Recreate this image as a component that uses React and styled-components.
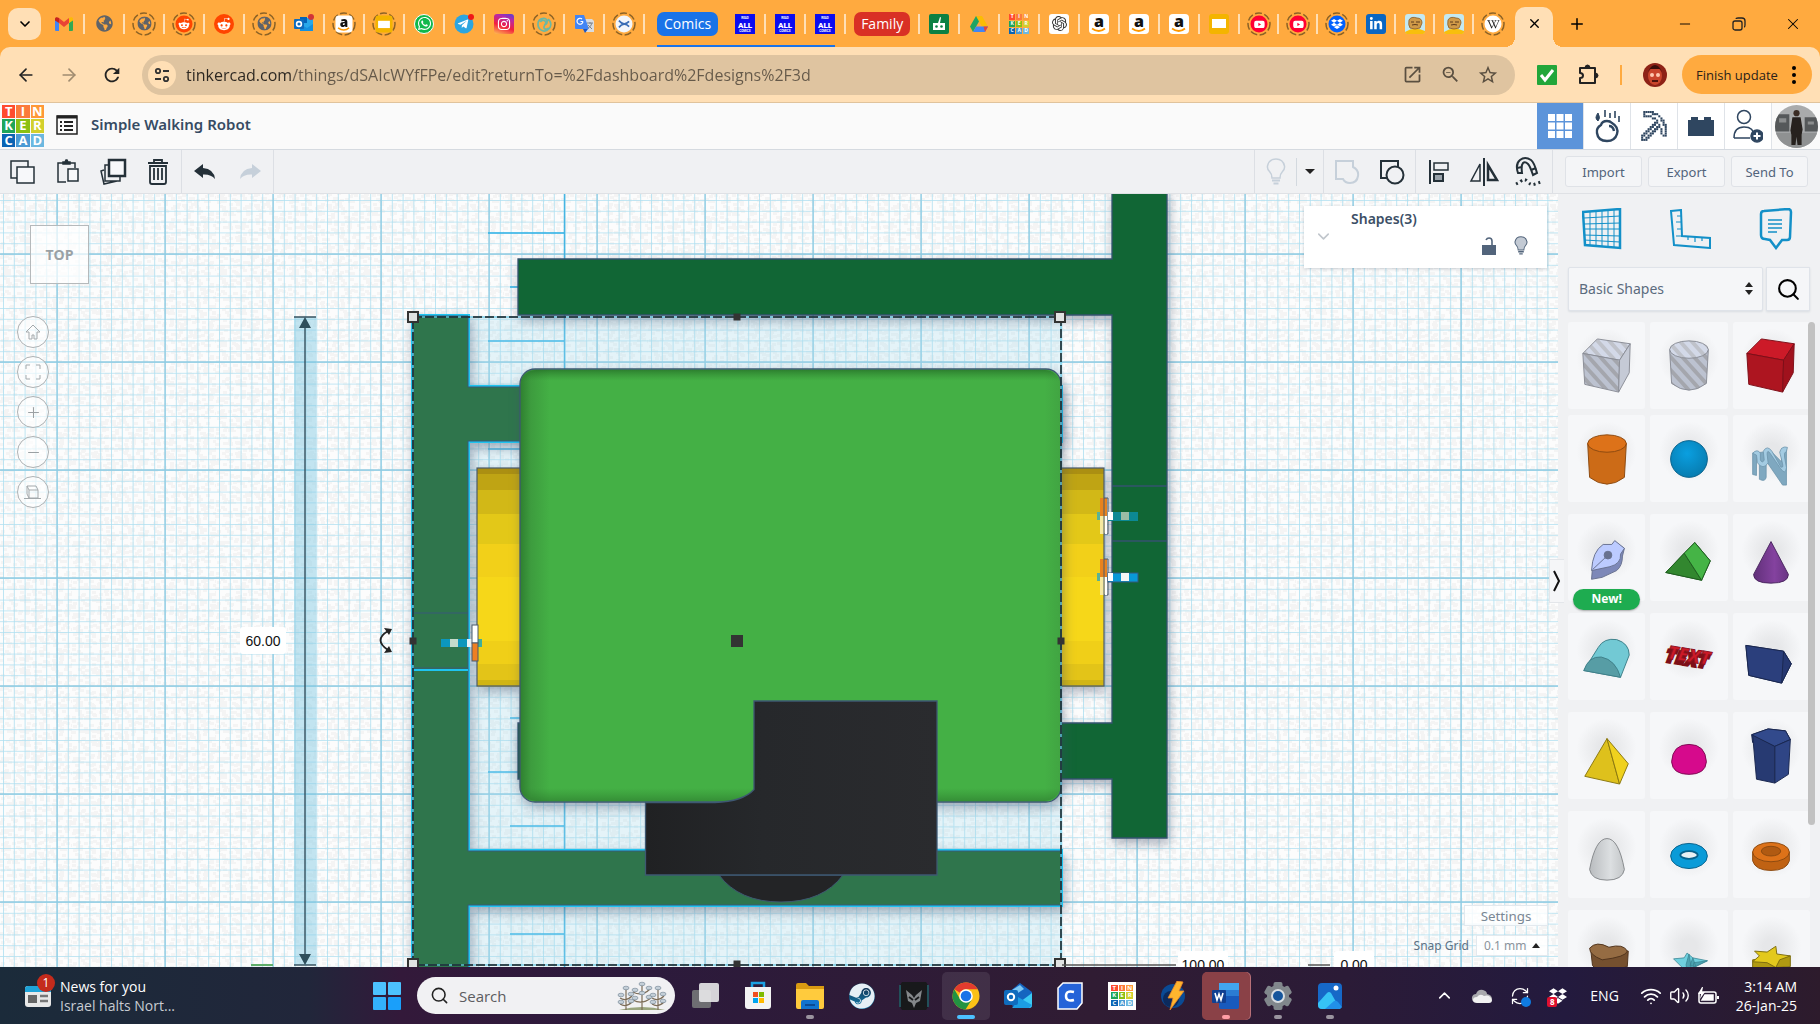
// src/App.jsx
import React, { useState } from "react";
import styled, { createGlobalStyle } from "styled-components";
import {
  FaRedditAlien,
  FaWhatsapp,
  FaTelegramPlane,
  FaInstagram,
  FaGlobeAmericas,
  FaLinkedinIn,
  FaDropbox,
  FaYoutube,
  FaWikipediaW,
  FaSteam,
} from "react-icons/fa";
import { SiOpenai } from "react-icons/si";
import { MdOpenInNew, MdZoomOut, MdStarBorder, MdOutlineRefresh } from "react-icons/md";
import {
  ArrowLeft,
  ArrowRight,
  ChevronDown,
  ChevronUp,
  X,
  Plus,
  Minus,
  Search,
  Wifi,
  Volume2,
  RefreshCw,
} from "lucide-react";

const GlobalStyle = createGlobalStyle`
  * { box-sizing: border-box; }
  html, body, #root { height: 100%; margin: 0; }
  body { font-family: "Open Sans", "Noto Sans", sans-serif; overflow: hidden; }
  button, input, select { font-family: inherit; }
  button { padding: 0; border: 0; background: none; cursor: pointer; color: inherit; }
  svg { display: block; flex: none; }
`;

/* ===== Tinkercad logo ===== */
const LOGO = [
  ["T", "#ff4b2f"], ["I", "#fb7a3c"], ["N", "#ff9838"],
  ["K", "#1ea55a"], ["E", "#8ac012"], ["R", "#d3d02c"],
  ["C", "#0a64b4"], ["A", "#4a9ad4"], ["D", "#6cb8e0"],
];

function TinkerLogo({ size, font }) {
  return (
    <LogoGrid $size={size} $font={font}>
      {LOGO.map(([l, c]) => (
        <LogoTile key={l} $bg={c}>{l}</LogoTile>
      ))}
    </LogoGrid>
  );
}

/* ===== favicons ===== */
const GmailIcon = () => (
  <svg width="18" height="14" viewBox="0 0 18 14">
    <path d="M0 2v11a1 1 0 0 0 1 1h3V6z" fill="#4285f4" />
    <path d="M18 2v11a1 1 0 0 1-1 1h-3V6z" fill="#34a853" />
    <path d="M4 6V1l5 4 5-4v5l-5 4z" fill="#ea4335" />
    <path d="M0 2C0 0 2-.5 4 1v5L0 3.500z" fill="#c5221f" />
    <path d="M18 2c0-2-2-2.500-4-1v5l4-2.500z" fill="#fbbc04" />
  </svg>
);
const GlobeIcon = () => <FaGlobeAmericas size={17} color="#5f6368" />;
const RedditIcon = () => (
  <Fav $bg="#ff4500" $round><FaRedditAlien size={14} color="#fff" /></Fav>
);
const OutlookIcon = () => (
  <svg width="20" height="20" viewBox="0 0 20 20">
    <path d="M6 4h13v13H6z" fill="#28a8ea" />
    <path d="M6 3h7v6H6z" fill="#0364b8" />
    <path d="M6 10l7 4 6-4v7H6z" fill="#1490df" />
    <rect y="5" width="10" height="10" rx="1" fill="#0f6cbd" />
    <circle cx="5" cy="10" r="2.400" fill="none" stroke="#fff" strokeWidth="1.600" />
    <circle cx="17" cy="3" r="3" fill="#d13438" />
  </svg>
);
const NewOutlookIcon = () => (
  <svg width="29" height="28" viewBox="0 0 29 28">
    <path d="M5 10L16 1l12 9v13a3 3 0 0 1-3 3H9z" fill="#1565c0" />
    <path d="M5 10L16 3l4 4-14 9z" fill="#7cc8f4" />
    <path d="M28 11v12a3 3 0 0 1-3 3H8z" fill="#3ccbf4" />
    <path d="M14 15l14 8-3 3H9z" fill="#1b9de2" />
    <rect y="8" width="14" height="15" rx="2" fill="#0f6cbd" />
    <circle cx="7" cy="15" r="3.200" fill="none" stroke="#fff" strokeWidth="2" />
  </svg>
);
const AmazonIcon = () => (
  <svg width="20" height="20" viewBox="0 0 20 20" overflow="visible">
    <rect width="20" height="20" rx="4" fill="#fff" />
    <text x="10" y="13" textAnchor="middle" fontFamily="Open Sans" fontWeight="800" fontSize="16" fill="#111">a</text>
    <path d="M3 14.500q7 5 13 0" fill="none" stroke="#ff9900" strokeWidth="1.800" />
  </svg>
);
const SlidesIcon = () => (
  <Fav $bg="#f4b400"><svg width="14" height="9"><rect width="14" height="9" fill="#fff" /></svg></Fav>
);
const WhatsappIcon = () => <Fav $bg="#10b84c" $round $ring><FaWhatsapp size={15} color="#fff" /></Fav>;
const TelegramIcon = () => (
  <svg width="20" height="20" viewBox="0 0 20 20">
    <circle cx="10" cy="10" r="9.500" fill="#2ca5e0" />
    <FaTelegramPlane x="3" y="4" size={12} color="#fff" />
    <circle cx="17" cy="3" r="3" fill="#f01818" />
  </svg>
);
const InstagramIcon = () => (
  <Fav $bg="linear-gradient(20deg,#fec053,#f2203e 40%,#b729a8 75%,#5342d6)"><FaInstagram size={14} color="#fff" /></Fav>
);
const SwirlIcon = () => (
  <svg width="20" height="20" viewBox="0 0 18 18" fill="none" stroke="#6ab8a5" strokeWidth="1.800">
    <path d="M7 16C1 13 1 4 8 3c5-1 6 6 1 7M10 16c7-1 8-9 3-12M5 7c3-4 8-1 5 3s1 6 4 3M7 16q4 2 7-2" />
  </svg>
);
const TranslateIcon = () => (
  <svg width="19" height="19" viewBox="0 0 19 19">
    <path d="M7 5h10l2 2v11H10z" fill="#dadce0" />
    <path d="M0 1h9l5 14H1a1 1 0 0 1-1-1z" fill="#4285f4" />
    <path d="M8 15h5l-3 4z" fill="#1a56c4" />
    <path d="M8 7.500H5.500M8 7.500A3 3 0 1 1 7 5" fill="none" stroke="#fff" strokeWidth="1.200" />
    <path d="M12 9h6M15 8v2M17 9q-1 4-4 5M13 11q2 2 4 4" fill="none" stroke="#80868b" />
  </svg>
);
const CrossIcon = () => (
  <Fav $bg="#f3f6fa" $round>
    <svg width="14" height="10" fill="none" stroke="#3a6db5" strokeWidth="2"><path d="M1 1q6 7 12 1M1 9q6-7 12-1" /></svg>
  </Fav>
);
const AllIcon = () => (
  <svg width="20" height="20" viewBox="0 0 20 20" overflow="visible">
    <rect width="20" height="20" fill="#0c0cf0" />
    <text x="10" y="5" textAnchor="middle" fontFamily="Roboto" fontWeight="700" fontSize="3" fill="#fff">READ</text>
    <text x="10" y="14" textAnchor="middle" fontFamily="Roboto" fontWeight="900" fontSize="8" fill="#fff">ALL</text>
    <text x="10" y="18" textAnchor="middle" fontFamily="Roboto" fontWeight="700" fontSize="3" fill="#fff">COMICS</text>
  </svg>
);
const RobotIcon = () => (
  <svg width="20" height="20" viewBox="0 0 20 20">
    <rect width="20" height="20" rx="2" fill="#0b8043" />
    <path d="M4 9h12v7H4zM9 9l2-6 1 .5L11 9z" fill="#fff" />
    <circle cx="7.500" cy="12.500" r="1.300" fill="#0b8043" /><circle cx="12.500" cy="12.500" r="1.300" fill="#0b8043" />
  </svg>
);
const DriveIcon = () => (
  <svg width="18" height="16" viewBox="0 0 18 16">
    <path d="M6 0h6l6 10.500h-6z" fill="#fbbc04" />
    <path d="M6 0L0 10.500 3 16l6-10.500z" fill="#1fa463" />
    <path d="M6 10.500h12L15 16H3z" fill="#4285f4" />
    <path d="M13.500 10.500H18L15 16z" fill="#ea4335" />
  </svg>
);
const OpenAiIcon = () => <Fav $bg="#fff"><SiOpenai size={15} color="#333" /></Fav>;
const YoutubeIcon = () => (
  <Fav $bg="#ff0033" $round><FaYoutube size={13} color="#fff" /></Fav>
);
const DropboxIcon = () => <Fav $bg="#0061fe" $round><FaDropbox size={14} color="#fff" /></Fav>;
const LinkedinIcon = () => <Fav $bg="#0a66c2"><FaLinkedinIn size={14} color="#fff" /></Fav>;
const WikiIcon = () => <Fav $bg="#fff" $round><FaWikipediaW size={15} color="#222" /></Fav>;
const FaceIcon = () => (
  <svg width="20" height="20" viewBox="0 0 20 20">
    <rect width="20" height="20" rx="3" fill="#c4e9f2" />
    <path d="M0 18q9-6 20-1v1q0 2-2 2H2q-2 0-2-2z" fill="#f8bf0c" />
    <path d="M4 6q2-4 8-2 5 0 5 5l-2 5q-5 2-10 0-2-3-1-8z" fill="#d09a48" stroke="#8a5a26" strokeWidth=".8" />
    <path d="M6 8h3M11 8h4M7 11q3-1 6 0" stroke="#5c3a1c" fill="none" />
  </svg>
);

const TABS_A = [
  ["Gmail", GmailIcon], ["Page", GlobeIcon], ["Page", GlobeIcon, 1], ["Reddit", RedditIcon, 1],
  ["Reddit", RedditIcon], ["Page", GlobeIcon, 1], ["Outlook", OutlookIcon], ["Amazon", AmazonIcon, 1],
  ["Slides", SlidesIcon, 1], ["WhatsApp", WhatsappIcon], ["Telegram", TelegramIcon], ["Instagram", InstagramIcon],
  ["Swirl", SwirlIcon, 1], ["Translate", TranslateIcon], ["Cross", CrossIcon, 1],
];
const TABS_B = [["Comics", AllIcon], ["Comics", AllIcon], ["Comics", AllIcon]];
const TABS_C = [
  ["Robot", RobotIcon], ["Drive", DriveIcon], ["Tinkercad", () => <TinkerLogo size={20} font={5} />],
  ["ChatGPT", OpenAiIcon], ["Amazon", AmazonIcon], ["Amazon", AmazonIcon], ["Amazon", AmazonIcon], ["Slides", SlidesIcon],
];
const TABS_D = [
  ["YouTube", YoutubeIcon, 1], ["YouTube", YoutubeIcon, 1], ["Dropbox", DropboxIcon, 1], ["LinkedIn", LinkedinIcon],
  ["Face", FaceIcon], ["Face", FaceIcon], ["Wikipedia", WikiIcon, 1],
];

function Tabs({ list, narrow }) {
  return list.map(([name, Icon, asleep], i) => (
    <Tab key={i} type="button" aria-label={name} $narrow={narrow}>
      {asleep ? (
        <Asleep>
          <svg width="24" height="24">
            <circle cx="12" cy="12" r="11" fill="none" stroke="#8b6226" strokeWidth="1.500" strokeDasharray="7 2.500" />
          </svg>
          <Shrink><Icon /></Shrink>
        </Asleep>
      ) : (
        <Icon />
      )}
    </Tab>
  ));
}

/* ===== toolbar icons ===== */
const line = { fill: "none", stroke: "#243038", strokeWidth: 1.5 };
const CopyIcon = () => (
  <svg width="26" height="26" viewBox="0 0 26 26" {...line}><path d="M18 8V2H1v17h6" /><path d="M7 8h17v16H7z" fill="#f7f8fa" /></svg>
);
const PasteIcon = () => (
  <svg width="24" height="26" viewBox="0 0 24 26" {...line}>
    <path d="M10 23H2V4h17v5" /><path d="M7 5V3h2l1-2h1l1 2h2v2z" fill="#243038" /><path d="M12 10h10v12H12z" fill="#f7f8fa" />
  </svg>
);
const DuplicateIcon = () => (
  <svg width="28" height="28" viewBox="0 0 28 28" {...line}>
    <path d="M5 12l-3 1 3 13 13-3M9 7H6v16h15v-4" /><path d="M10 2h16v16H10z" strokeWidth="2.500" fill="#f7f8fa" />
  </svg>
);
const TrashIcon = () => (
  <svg width="24" height="28" viewBox="0 0 24 28" {...line} strokeWidth="1.800">
    <path d="M2 5h20M8 5V2h8v3M4 8v16q0 2 2 2h12q2 0 2-2V8zM8 10v12M12 10v12M16 10v12" />
  </svg>
);
const ArrowCurve = ({ color, flip }) => (
  <svg width="22" height="16" viewBox="0 0 22 16" fill={color}>
    <path d={flip ? "M22 7L13 0v4Q2 5 1 15q4-5 12-4.500V14z" : "M0 7l9-7v4q11 1 12 11-4-5-12-4.500V14z"} />
  </svg>
);
const BulbIcon = ({ color, width = 20, height = 27, fill = "none" }) => (
  <svg width={width} height={height} viewBox="0 0 20 27" fill={fill} stroke={color} strokeWidth="1.500">
    <path d="M6 20q0-4-2.500-6.500Q1 11 1.500 8 3 1 10 1t8.500 7q.5 3-2 5.500Q14 16 14 20z" /><path d="M6 22.500h8M7.500 25.500h5" strokeWidth="2" />
  </svg>
);
const GroupIcon = () => (
  <svg width="26" height="26" viewBox="0 0 26 26" fill="none" stroke="#c6d0da" strokeWidth="2"><path d="M2 2h17v6q6 3 5 9-1 7-8 7-5 0-7-4H2z" /></svg>
);
const UngroupIcon = () => (
  <svg width="26" height="26" viewBox="0 0 26 26" {...line} strokeWidth="2"><path d="M9 19H2V2h17v6" /><circle cx="16" cy="16" r="8.500" /></svg>
);
const AlignIcon = () => (
  <svg width="22" height="26" viewBox="0 0 22 26" {...line}><path d="M2 1v24" strokeWidth="2" /><path d="M6 4h14v7H6z" /><path d="M6 15h9v7H6z" fill="#9aa3ab" strokeWidth="2" /></svg>
);
const MirrorIcon = () => (
  <svg width="30" height="28" viewBox="0 0 30 28" {...line}><path d="M15 0v28" strokeWidth="2" /><path d="M11 6v17H2z" /><path d="M19 7v15h9z" strokeWidth="2.500" /></svg>
);
const MagnetIcon = () => (
  <svg width="28" height="32" viewBox="0 0 28 32" {...line} strokeWidth="2">
    <path d="M3 17Q0 8 5 4t11 0q3 2 6 13l-4 2q-3-9-5-11-3-3-5-1-2 2-1 10z" /><path d="M2 12l5-1M16 14l5-2" />
    <path d="M1 28l4-2q4-4 7-1 4 5 8 3l6-2" strokeDasharray="2 3" strokeWidth="3" />
  </svg>
);

/* ===== mode icons ===== */
const GridIcon = () => (
  <svg width="24" height="24" viewBox="0 0 24 24" fill="#fff">
    {[0, 1, 2].map((r) => [0, 1, 2].map((c) => <rect key={`${r}${c}`} x={c * 8.5} y={r * 8.5} width="7" height="7" />))}
  </svg>
);
const AppleIcon = () => (
  <svg width="28" height="34" viewBox="0 0 28 34" fill="none" stroke="#2f4660" strokeWidth="2.400">
    <path d="M8 16q1-4 6-4 3 0 5 2 7 4 5 11-2 7-10 7-9 0-10-8-1-5 4-8zM16 17q4 0 5 5" />
    <path d="M5 4q-4 5 0 8 3-3 0-8z" fill="#2f4660" strokeWidth="1" /><path d="M12 1v7M17 4v5M22 2v7M26 7v6" strokeWidth="1.600" />
  </svg>
);
const PICK = [
  "..XXXXX.......", "..X...XXX.....", "..XXXX...X....", "......XX..X...", "........X.XX..", ".......XX..X..", "......XX.X.XX.",
  ".....XX.XX..X.", "....XX.XX.X.X.", "...XX.XX..X.X.", "..XX.XX...X.X.", ".XX.XX.....XX.", ".X.XX.........", ".XXX..........",
];
const PickaxeIcon = () => (
  <svg width="30" height="32" viewBox="0 0 28 28" fill="#2f4660">
    {PICK.map((r, y) => [...r].map((c, x) => c === "X" && <rect key={`${x}-${y}`} x={x * 2} y={y * 2} width="1.900" height="1.900" />))}
  </svg>
);
const BrickIcon = () => (
  <svg width="26" height="20" viewBox="0 0 26 20" fill="#2f4660"><path d="M0 4h3V1h7v3h6V1h7v3h3v16H0z" /></svg>
);
const InviteIcon = () => (
  <svg width="30" height="34" viewBox="0 0 30 34" fill="none" stroke="#2f4660" strokeWidth="1.500">
    <circle cx="11" cy="8" r="6.500" /><path d="M1 29q0-11 10-11t10 9M1 29h16" /><circle cx="24" cy="27" r="6" fill="#2f4660" />
    <path d="M24 23.500v7M20.500 27h7" stroke="#fff" strokeWidth="2" />
  </svg>
);

/* ===== sidebar tools ===== */
const blue = { fill: "none", stroke: "#1390c8", strokeWidth: 2 };
const WorkplaneIcon = () => (
  <svg width="40" height="42" viewBox="0 0 40 42" {...blue}>
    <path d="M1 4l37-3v39L3 37z" strokeWidth="2.500" />
    <path d="M2 10l36-2M2 16l36-1M2 21h36M2 27l36 1M2 32l36 2M8 4v33M14 3v35M20 3v36M26 2v37M32 2v38" strokeWidth="1" />
  </svg>
);
const RulerIcon = () => (
  <svg width="42" height="40" viewBox="0 0 42 40" {...blue}>
    <path d="M1 2l10-1 1 26 28 2v10L4 36z" /><path d="M11 7H7M11 13H6M11 20H7M18 28v3M25 28v5M32 29v3M12 27l-6 0" strokeWidth="1.200" />
  </svg>
);
const NotesIcon = () => (
  <svg width="34" height="42" viewBox="0 0 34 42" {...blue} strokeWidth="2.500">
    <path d="M5 3l24-2q3 0 3 3l-1 25q0 3-3 3h-5l-6 8-6-8-5-1q-4 0-4-4L2 6q0-3 3-3z" /><path d="M9 12h14M9 16h14M9 20h14M9 24h9" strokeWidth="1.500" />
  </svg>
);

/* ===== basic shapes, each drawn in a 60x64 box ===== */
const SHAPES = [
  ["Box hole", (
    <g stroke="#8a8d96" strokeWidth="1">
      <path d="M5 19L20 4l34 5-11 17z" fill="url(#holeLight)" /><path d="M5 19l38 7-1 33-35-8z" fill="url(#holeDark)" /><path d="M54 9L43 26l-1 33 11-20z" fill="#c5cad6" />
    </g>
  )],
  ["Cylinder hole", (
    <g stroke="#8a8d96"><path d="M10 15l2 35q18 14 36 0l2-35z" fill="url(#holeDark)" /><ellipse cx="30" cy="15" rx="20" ry="9" fill="url(#holeLight)" /></g>
  )],
  ["Box", (
    <g stroke="#7d0f18"><path d="M5 19L20 4l34 5-11 17z" fill="#cc1a28" /><path d="M5 19l38 7-1 33-35-8z" fill="#ad1520" /><path d="M54 9L43 26l-1 33 11-20z" fill="#a0121d" /></g>
  )],
  ["Cylinder", (
    <g stroke="#8c4a10"><path d="M10 16l2 35q18 14 36 0l2-35z" fill="#cc6b17" /><ellipse cx="30" cy="16" rx="20" ry="9" fill="#dd7219" /></g>
  )],
  ["Sphere", <circle cx="30" cy="32" r="19" fill="url(#ballBlue)" stroke="#07618c" />],
  ["Scribble", (
    <g strokeLinejoin="round" stroke="#6c93ab" strokeWidth=".8">
      <path d="M11 26v22l4 1V30l3 2v21q6 3 7-2V34l17 25h4V21h-5v14L30 24z" fill="#7fa8c0" />
      <path d="M11 26q5-5 8 0v7q2 4 4 0l-1-9q4-7 9 0l9 16q3 2 2-3l-3-12q2-7 8-5l-1 4q-3 1-2 6l2 11q-1 8-6 1L29 26q-3-4-3 1l1 9q-5 8-11 0l-1-8z" fill="#a3cbe2" />
    </g>
  )],
  ["Pen", (
    <g stroke="#68718f"><path d="M14 54l1-12q2-16 14-21l6-1 4-4 9 6-2 8q0 10-6 15l-15 7z" fill="#7d88b8" /><path d="M14 45q1-20 12-27h9l3-4 10 8-4 6q1 10-11 13z" fill="#bccbff" /><circle cx="31" cy="29" r="4" fill="#68718f" /><path d="M15 44l16-15" /></g>
  ), "New!"],
  ["Roof", (
    <g stroke="#1f5d20"><path d="M6 47L36 16l16 19-9 20z" fill="#45ae46" /><path d="M6 47l19-20 18 28z" fill="#32872f" /><path d="M36 16L25 27l18 28 9-20z" fill="#45b446" /></g>
  )],
  ["Cone", <path d="M30 15l18 34q0 9-18 9t-18-9z" fill="url(#conePurple)" stroke="#4b2760" />],
  ["Round roof", (
    <g stroke="#3e8089"><path d="M6 46l15-24q6-10 19-8 13 4 13 16l-9 23z" fill="#72c9d4" /><path d="M6 46q5-15 18-14 15 3 20 21z" fill="#579da5" /></g>
  )],
  ["Text", (
    <g transform="rotate(9 30 32)" fontFamily="Open Sans" fontWeight="800" fontStyle="italic" fontSize="19" textAnchor="middle">
      <text x="28" y="41" fill="#7d0f18" stroke="#7d0f18" strokeWidth="2">TEXT</text><text x="30" y="37" fill="#cc1a28" stroke="#8f121c" strokeWidth="1">TEXT</text>
    </g>
  )],
  ["Wedge", (
    <g stroke="#1a2750"><path d="M4 20l39 6-2 33-34-8z" fill="#2b3f7c" /><path d="M4 20l39 6 8 13-10 20-34-8z" fill="#2b3f7c" /><path d="M43 26l8 13-10 20z" fill="#263871" /></g>
  )],
  ["Pyramid", (
    <g stroke="#8a7710"><path d="M30 14L7 53l36 8z" fill="#dec11c" /><path d="M30 14l22 26-9 21z" fill="#efd11e" /></g>
  )],
  ["Half sphere", <path d="M12 38q1-18 18-18t18 18q-1 13-18 13T12 38z" fill="#d60a8c" stroke="#7d0852" />],
  ["Polygon", (
    <g stroke="#1a2750"><path d="M10 10l17-6 18 2 5 9-16 7-23-4z" fill="#324a8c" /><path d="M11 10l23 12v38l-19-4z" fill="#273a72" /><path d="M10 10l17-6 18 2 5 9-16 7z" fill="#324a8c" /><path d="M50 15l-16 7v38l14-9z" fill="#2f4585" /></g>
  )],
  ["Paraboloid", <path d="M12 47q6-32 18-32t18 32q-2 11-18 11t-18-11z" fill="url(#grey)" stroke="#86898c" />],
  ["Torus", (
    <g><ellipse cx="30" cy="33" rx="19" ry="13" fill="#0a9bd8" stroke="#07618c" /><ellipse cx="30" cy="32" rx="9" ry="4" fill="#e8eff3" stroke="#07618c" strokeWidth="2" /></g>
  )],
  ["Tube", (
    <g stroke="#8c4a10"><path d="M11 29v9q3 10 19 10t19-10v-9z" fill="#c06213" /><ellipse cx="30" cy="29" rx="19" ry="10" fill="#dd7219" /><ellipse cx="30" cy="28" rx="10" ry="5" fill="#b05a12" /></g>
  )],
  ["Heart", (
    <g stroke="#50341d"><path d="M13 26l2 18 10 9 26-8 1-16z" fill="#75502f" /><path d="M25 38Q12 33 12 26q7-8 20-1 15-4 19 4-1 6-26 9z" fill="#956c43" /></g>
  )],
  ["Star 5", (
    <g stroke="#3a8593" strokeWidth=".8"><path d="M14 37l11-1 3-5 6 5 15 3-12 6 1 11-9-5-12 3 5-9z" fill="#6fd0de" /><path d="M30 32l-3 11 1 8 5-1zM34 36l-3 8 6 1zM49 39l-14 2-1 5z" fill="#4ba3b1" /></g>
  )],
  ["Star 6", (
    <g stroke="#7d6d0e"><path d="M11 38v13h14l10 5V46l15-1V34z" fill="#b09a12" /><path d="M13 29l13 1 9-6 1 8 14 2-11 4-4 8-9-5-15-1 7-6z" fill="#e3c91c" /></g>
  )],
];

function ShapeDefs() {
  return (
    <HiddenSvg width="0" height="0" aria-hidden="true">
      <defs>
        <pattern id="holeLight" width="9" height="9" patternUnits="userSpaceOnUse" patternTransform="rotate(-42)"><rect width="9" height="9" fill="#d3d9e8" /><rect width="4" height="9" fill="#bfc2ca" /></pattern>
        <pattern id="holeDark" width="9" height="9" patternUnits="userSpaceOnUse" patternTransform="rotate(-42)"><rect width="9" height="9" fill="#bcc2d0" /><rect width="4" height="9" fill="#a4a6ad" /></pattern>
        <radialGradient id="ballBlue" cx=".45" cy=".35" r=".7"><stop offset="0" stopColor="#0a9fe0" /><stop offset="1" stopColor="#077aad" /></radialGradient>
        <linearGradient id="conePurple"><stop offset="0" stopColor="#61307a" /><stop offset=".6" stopColor="#84429f" /><stop offset="1" stopColor="#6a3584" /></linearGradient>
        <linearGradient id="grey"><stop offset="0" stopColor="#b9bcbf" /><stop offset=".6" stopColor="#dcdfe1" /><stop offset="1" stopColor="#c3c6c8" /></linearGradient>
      </defs>
    </HiddenSvg>
  );
}

/* ===== workplane scene ===== */
const SPECKS = Array.from({ length: 260 }, (_, i) => [(i * 37 + ((i * i) % 23)) % 72, (i * 53 + ((i * i * 7) % 31)) % 72]);
const WHEEL = [
  [468, 6, "#ab8f12"], [474, 16, "#bfa414"], [490, 24, "#d2b817"], [514, 30, "#e3c818"], [544, 33, "#f2d019"],
  [577, 64, "#f6d719"], [641, 23, "#f0cf18"], [664, 16, "#e3c418"], [680, 6, "#d1b514"],
];
const TICKS = [[488, 233], [510, 287], [488, 341], [488, 449], [510, 718], [488, 772], [510, 826], [510, 934]];

function Wheel({ x, w }) {
  return (
    <g filter="url(#soft)">
      {WHEEL.map(([y, h, c]) => <rect key={y} x={x} y={y} width={w} height={h + 0.5} fill={c} />)}
      <rect x={x} y="468" width={w} height="218" fill="none" stroke="#4b5a6b" strokeWidth="1.200" />
    </g>
  );
}

function Bolt({ y, muted }) {
  return (
    <g>
      <rect x="1097" y={y - 4} width="4" height="8" fill="#5ab295" />
      <rect x="1100" y={y - 18} width="7" height="18" fill="#e8821e" />
      <rect x="1100" y={y} width="7" height="18" fill="#f6e9a0" />
      <path d={`M1104 ${y - 18}h4v36h-4z`} fill="none" stroke="#4b5a6b" />
      <rect x="1105" y={y} width="2" height="18" fill="#fff" />
      <rect x="1108" y={y - 4} width="30" height="9" fill={muted ? "#0c8994" : "#0899d6"} stroke={muted ? "none" : "#35587c"} />
      <rect x="1108" y={y - 4} width="5" height="8" fill="#fff" />
      <rect x="1121" y={y - 4} width="8" height="8" fill={muted ? "#9bbda5" : "#f4f6f6"} />
    </g>
  );
}

function Scene() {
  return (
    <SceneSvg viewBox="0 194 1558 773" preserveAspectRatio="xMinYMin slice">
      <defs>
        <pattern id="paper" width="72" height="72" patternUnits="userSpaceOnUse">
          <rect width="72" height="72" fill="#fcfcfc" />
          {SPECKS.map(([x, y], i) => <rect key={i} x={x} y={y} width="4" height="3" fill="#f4f4f4" />)}
        </pattern>
        <pattern id="minor" x="57" y="254" width="10.8" height="10.8" patternUnits="userSpaceOnUse">
          <path d="M0 0H10.800M0 0V10.800" stroke="#aee0f1" strokeWidth="1.600" fill="none" />
        </pattern>
        <pattern id="major" x="56" y="253" width="108" height="108" patternUnits="userSpaceOnUse">
          <path d="M0 1H108M1 0V108" stroke="#8fcbe2" strokeWidth="1.300" fill="none" />
        </pattern>
        <filter id="soft" x="-20%" y="-10%" width="140%" height="120%" colorInterpolationFilters="sRGB">
          <feDropShadow dx="2" dy="5" stdDeviation="6" floodColor="#3b4a66" floodOpacity=".42" />
        </filter>
        <linearGradient id="bodyX">
          <stop offset="0" stopColor="#2f7f30" /><stop offset=".02" stopColor="#3d9c3e" /><stop offset=".055" stopColor="#44b045" />
          <stop offset=".97" stopColor="#44b045" /><stop offset="1" stopColor="#41a442" />
        </linearGradient>
        <linearGradient id="bodyY" x2="0" y2="1">
          <stop offset="0" stopColor="#1e6120" stopOpacity=".6" /><stop offset=".025" stopColor="#2b7a2c" stopOpacity="0" />
          <stop offset=".97" stopColor="#2b7a2c" stopOpacity="0" /><stop offset="1" stopColor="#276f28" stopOpacity=".5" />
        </linearGradient>
        <linearGradient id="head"><stop offset="0" stopColor="#202123" /><stop offset=".4" stopColor="#26282b" /><stop offset="1" stopColor="#2a2b2e" /></linearGradient>
      </defs>

      <rect y="194" width="1558" height="773" fill="url(#paper)" />
      <rect y="194" width="1558" height="773" fill="url(#minor)" />
      <rect y="194" width="1558" height="773" fill="url(#major)" />
      <path d="M564.500 194V967" stroke="#45b5e2" strokeWidth="1.500" />
      {TICKS.map(([x, y]) => <path key={y} d={`M${x} ${y}H564`} stroke="#2cb0e6" strokeWidth="1.300" />)}

      {/* selection footprint */}
      <rect x="413" y="317" width="648" height="648" fill="#a5dcee" fillOpacity=".28" />

      {/* dimension rule */}
      <rect x="294" y="317" width="22" height="648" fill="#7cc7e3" fillOpacity=".45" />
      <path d="M294 317h22M305 325V957M294 965h22" stroke="#36525f" strokeWidth="1.400" />
      <path d="M305 317l6 11h-12zM305 965l6-11h-12z" fill="#2f4f5c" />

      {/* rear frame */}
      <path d="M1112 190h55v648h-55V779H518V723h594V315H518V259h594z" fill="#116635" stroke="#34536f" strokeWidth="1.300" filter="url(#soft)" />
      <path d="M1112 486h55M1112 541h55" stroke="#34536f" strokeWidth="1.500" />

      {/* front frame */}
      <path d="M413 316h55v71h593v54H468v410H1061v54H468v64H413z" fill="#2f754c" stroke="#1fc4f0" strokeWidth="4" filter="url(#soft)" />
      <path d="M413 316h55v71h593v54H468v410H1061v54H468v64H413z" fill="#2f754c" stroke="#385a78" strokeWidth="1" />
      <path d="M413 613h55M413 668h55" stroke="#385a78" />
      <path d="M413 670h55" stroke="#1fc4f0" strokeWidth="2" />

      <Wheel x={477} w={44} />
      <Wheel x={1061} w={43} />

      {/* body */}
      <rect x="520" y="369" width="541" height="433" rx="15" fill="url(#bodyX)" stroke="#3e5872" strokeWidth="1.300" filter="url(#soft)" />
      <rect x="521" y="370" width="539" height="431" rx="15" fill="url(#bodyY)" />

      {/* head */}
      <path d="M719 875q20 27 62 27t62-27z" fill="#232426" stroke="#3e5872" />
      <path d="M754 701H937V875H645.500V802.500H715q28-1 39-13z" fill="url(#head)" stroke="#3e5872" strokeWidth="1.300" />

      <Bolt y={516} muted />
      <Bolt y={577} />

      {/* left bolt */}
      <rect x="441" y="639" width="36" height="8" fill="#0c97bd" />
      <rect x="450" y="639" width="8" height="8" fill="#c5dbcb" /><rect x="467" y="639" width="5" height="8" fill="#e6f3f8" />
      <rect x="478" y="639" width="4" height="8" fill="#3fae9c" />
      <rect x="472" y="625" width="6" height="18" fill="#fff" stroke="#4b5a6b" /><rect x="472" y="643" width="6" height="18" fill="#ee7f22" stroke="#4b5a6b" />

      {/* selection box */}
      <rect x="413" y="317" width="648" height="648" fill="none" stroke="#5fc8e8" strokeWidth="1.200" />
      <rect x="413" y="317" width="648" height="648" fill="none" stroke="#151b1e" strokeWidth="1.500" strokeDasharray="9 3" />
      {[[413, 317], [1060, 317], [413, 964], [1060, 964]].map(([x, y]) => (
        <rect key={`${x}${y}`} x={x - 5} y={y - 5} width="10" height="10" fill="#e0e2e2" stroke="#333" strokeWidth="2" />
      ))}
      {[[737, 317], [413, 641], [1061, 641], [737, 964]].map(([x, y]) => (
        <rect key={`${x}${y}`} x={x - 3.5} y={y - 3.5} width="7" height="7" fill="#333" />
      ))}
      <rect x="731" y="635" width="12" height="12" fill="#333" />

      {/* rotation handle */}
      <path d="M388 631q-15 9 0 19" fill="none" stroke="#222" strokeWidth="1.800" />
      <path d="M392 629l-8-1 5 7zM392 652l-8 1 5-7z" fill="#222" />

      <path d="M251 965h22" stroke="#5fae6a" strokeWidth="2" />
      <path d="M1062 965h114M1308 965h22" stroke="#555" strokeWidth="1.500" />
    </SceneSvg>
  );
}

/* ===== taskbar icons ===== */
const ChromeIcon = () => (
  <svg width="28" height="28" viewBox="0 0 28 28">
    <circle cx="14" cy="14" r="13.500" fill="#fbc116" />
    <path d="M2.300 7.200A13.500 13.500 0 0 1 25.700 7.200H14a6.800 6.800 0 0 0-6 3.500z" fill="#e33b2e" />
    <path d="M2.300 7.200A13.500 13.500 0 0 0 13.500 27.500L19.500 18 8 17z" fill="#229342" />
    <circle cx="14" cy="14" r="6.800" fill="#fff" /><circle cx="14" cy="14" r="5.300" fill="#1a73e8" />
  </svg>
);
const TASKS = [
  ["Task view", <svg width="28" height="28"><rect y="8" width="19" height="18" rx="2" fill="#6e6e72" /><rect x="7" y="1" width="20" height="19" rx="2" fill="#e8e8ea" fillOpacity=".9" /></svg>],
  ["Store", (
    <svg width="28" height="30"><path d="M8 8V2h12v6" fill="none" stroke="#1ba1e2" strokeWidth="2.500" /><path d="M1 6h26v19q0 3-3 3H4q-3 0-3-3z" fill="#f3f3f3" />
      <path d="M9 11h5v5H9z" fill="#f25022" /><path d="M15 11h5v5h-5z" fill="#7fba00" /><path d="M9 17h5v5H9z" fill="#00a4ef" /><path d="M15 17h5v5h-5z" fill="#ffb900" /></svg>
  )],
  ["Explorer", <svg width="30" height="28"><path d="M1 3q0-2 2-2h8l3 3h15v8H1z" fill="#d99b12" /><path d="M1 7h28v18q0 2-2 2H3q-2 0-2-2z" fill="#ffcb3d" /><path d="M6 20q0-2 2-2h14q2 0 2 2v7H6z" fill="#1173cf" /><path d="M10 23h10" stroke="#0b4a94" strokeWidth="2" /></svg>, "dot"],
  ["Steam", <SteamBall key="s" />],
  ["Predator", <svg width="30" height="30"><path d="M3 1h24l2 3v22l-2 3H3l-2-3V4z" fill="#18191b" /><path d="M1 4v22M29 4v22" stroke="#22505a" strokeWidth="2" /><path d="M7 9l6 5 2 3 2-3 6-5-2 11-4 2-2 5-2-5-4-2z" fill="#85888b" /><path d="M10 16l4 3M20 16l-4 3" stroke="#18191b" strokeWidth="1.800" /></svg>],
  ["Chrome", <ChromeIcon key="c" />, "active"],
  ["Outlook", <NewOutlookIcon key="o" />],
  ["Cura", <svg width="26" height="28"><path d="M6 1h19v20l-5 6H1V6z" fill="#2563d8" stroke="#fff" strokeWidth="1.500" /><path d="M17 10q-8-2-8 4t8 4" fill="none" stroke="#fff" strokeWidth="2.500" /></svg>],
  ["Tinkercad", <LogoPlate key="t" />],
  ["Bolt", <svg width="28" height="30"><circle cx="13" cy="15" r="12" fill="#0a4a94" /><circle cx="11" cy="18" r="8" fill="#0c2a5c" /><path d="M17 0l6 1-4 9 5 0-14 19 3-12H8z" fill="#ffb52e" stroke="#e8862a" strokeWidth=".8" /></svg>],
  ["Word", <svg width="28" height="28"><rect x="7" y="1" width="20" height="26" rx="2" fill="#185abd" /><path d="M7 1h20v7H7z" fill="#41a5ee" /><path d="M7 8h20v6H7z" fill="#2b7cd3" /><rect y="8" width="14" height="13" rx="1" fill="#103f91" /><path d="M3 11l2 7 2-6 2 6 2-7" fill="none" stroke="#fff" strokeWidth="1.600" /></svg>, "alert"],
  ["Settings", (
    <svg width="30" height="30" viewBox="0 0 30 30">
      <g fill="#81878c">{[0, 60, 120].map((a) => <rect key={a} x="10.500" y="1" width="9" height="28" rx="2" transform={`rotate(${a} 15 15)`} />)}<circle cx="15" cy="15" r="11" /></g>
      <circle cx="15" cy="15" r="6" fill="#16559c" stroke="#d8dde2" strokeWidth="2" />
    </svg>
  ), "dot"],
  ["Photos", <svg width="26" height="28"><rect x="1" y="1" width="24" height="26" rx="4" fill="#1668c7" /><path d="M1 21l9-10q2-2 4 0l9 16H5q-4 0-4-4z" fill="#36c3f5" /><path d="M8 27l9-8q2-1 4 1l4 5q-1 2-3 2z" fill="#2190e8" /><circle cx="19" cy="6" r="2.500" fill="#fff" /></svg>, "dot"],
];

function SteamBall() {
  return <Round $bg="linear-gradient(#15233f,#1387b8)"><FaSteam size={26} color="#e6eff5" /></Round>;
}
function LogoPlate() {
  return <Plate><TinkerLogo size={22} font={6} /></Plate>;
}

export default function App() {
  const [category, setCategory] = useState("Basic Shapes");
  const rows = [];
  for (let i = 0; i < SHAPES.length; i += 3) rows.push(SHAPES.slice(i, i + 3));

  return (
    <>
      <GlobalStyle />
      <ShapeDefs />
      <Screen>
        {/* tab strip */}
        <TabStrip>
          <TabMenu type="button" aria-label="Search tabs"><ChevronDown size={16} strokeWidth={2.5} /></TabMenu>
          <Group><Tabs list={TABS_A} /></Group>
          <ComicsGroup><Pill type="button" $bg="#1a73e8">Comics</Pill><Tabs list={TABS_B} /></ComicsGroup>
          <FamilyGroup><Pill type="button" $bg="#d93025">Family</Pill></FamilyGroup>
          <Group><Tabs list={TABS_C} /><Tabs list={TABS_D} narrow /></Group>
          <ActiveTab type="button" aria-label="Close tab"><X size={15} strokeWidth={2.2} /></ActiveTab>
          <NewTab type="button" aria-label="New tab"><Plus size={18} /></NewTab>
          <WindowButtons>
            <button type="button" aria-label="Minimize"><Minus size={16} strokeWidth={1.4} /></button>
            <button type="button" aria-label="Restore">
              <svg width="14" height="14" fill="none" stroke="#222" strokeWidth="1.300"><rect x="1" y="4" width="9" height="9" rx="2" /><path d="M4 2q0-1 2-1h4q3 0 3 3v4q0 2-1 2" /></svg>
            </button>
            <button type="button" aria-label="Close"><X size={18} strokeWidth={1.4} /></button>
          </WindowButtons>
        </TabStrip>

        {/* address bar */}
        <AddressRow>
          <NavBtn type="button" aria-label="Back"><ArrowLeft size={20} /></NavBtn>
          <NavBtn type="button" aria-label="Forward" $dim><ArrowRight size={20} /></NavBtn>
          <NavBtn type="button" aria-label="Reload"><MdOutlineRefresh size={22} /></NavBtn>
          <Omnibox>
            <SiteInfo type="button" aria-label="Site information">
              <svg width="16" height="16" fill="none" stroke="#333" strokeWidth="1.800"><circle cx="4" cy="4" r="2.200" /><path d="M9 4h6M1 12h6" /><circle cx="12" cy="12" r="2.200" /></svg>
            </SiteInfo>
            <Url aria-label="Address" defaultValue="tinkercad.com/things/dSAIcWYfFPe/edit?returnTo=%2Fdashboard%2Fdesigns%2F3d" />
            <OmniBtn type="button" aria-label="Open"><MdOpenInNew size={21} /></OmniBtn>
            <OmniBtn type="button" aria-label="Zoom"><MdZoomOut size={21} /></OmniBtn>
            <OmniBtn type="button" aria-label="Bookmark"><MdStarBorder size={22} /></OmniBtn>
          </Omnibox>
          <Extensions>
            <svg width="20" height="20"><rect width="20" height="20" rx="1" fill="#22a63a" /><path d="M4 10l4 5 8-10" fill="none" stroke="#fff" strokeWidth="3" /></svg>
            <svg width="21" height="21" fill="none" stroke="#222" strokeWidth="2"><path d="M2 4h15v15H2v-5q3 0 3-2.500T2 9z" strokeLinejoin="round" /><path d="M7 4q0-3 2.500-3T12 4zM17 9q3 0 3 2.500T17 14z" fill="#222" strokeWidth="1" /></svg>
            <BarLine />
            <svg width="24" height="24"><circle cx="12" cy="12" r="12" fill="#8e2216" /><ellipse cx="12" cy="13" rx="7" ry="9" fill="#c9452c" /><path d="M5 9q3-7 7-7t7 7l-2-3H7z" fill="#3a0d0a" /><circle cx="9" cy="12" r="2" fill="#ffc9b0" /><circle cx="15" cy="12" r="2" fill="#ffc9b0" /><path d="M9 18h6" stroke="#4e120c" strokeWidth="2" /></svg>
          </Extensions>
          <UpdateBtn type="button">
            Finish update
            <svg width="4" height="18"><circle cx="2" cy="2" r="2" /><circle cx="2" cy="9" r="2" /><circle cx="2" cy="16" r="2" /></svg>
          </UpdateBtn>
        </AddressRow>

        {/* app header */}
        <AppHeader>
          <TinkerLogo size={42} font={13} />
          <ListBtn type="button" aria-label="Designs">
            <svg width="22" height="20" fill="none" stroke="#222" strokeWidth="1.500"><rect x="1" y="1" width="20" height="18" /><path d="M1 2h20" strokeWidth="3" /><path d="M8 7h9M8 11h9M8 15h9M4 7h2M4 11h2M4 15h2" strokeWidth="2" /></svg>
          </ListBtn>
          <Title>Simple Walking Robot</Title>
          <Modes>
            <Mode type="button" aria-label="3D design" $active><GridIcon /></Mode>
            <Mode type="button" aria-label="Sim lab"><AppleIcon /></Mode>
            <Mode type="button" aria-label="Blocks"><PickaxeIcon /></Mode>
            <Mode type="button" aria-label="Bricks"><BrickIcon /></Mode>
            <Mode type="button" aria-label="Invite"><InviteIcon /></Mode>
            <Avatar type="button" aria-label="Account">
              <svg width="43" height="43" viewBox="0 0 42 42">
                <rect width="42" height="42" fill="#a9abac" /><path d="M0 9h14v17H0zM29 12h13v14H29z" fill="#55585a" /><path d="M0 27h42v15H0z" fill="#8f9192" /><path d="M4 13h7v4H4zM32 16h6v3h-6z" fill="#8b8d8e" />
                <circle cx="21" cy="8" r="3" fill="#3a2c25" /><path d="M17 12h8l2 12-1 5v10h-4l-1-8-1 8h-4V29l-1-4z" fill="#26211e" />
              </svg>
            </Avatar>
          </Modes>
        </AppHeader>

        {/* edit toolbar */}
        <EditBar>
          <Tools>
            <Tool type="button" aria-label="Copy"><CopyIcon /></Tool>
            <Tool type="button" aria-label="Paste"><PasteIcon /></Tool>
            <Tool type="button" aria-label="Duplicate"><DuplicateIcon /></Tool>
            <Tool type="button" aria-label="Delete"><TrashIcon /></Tool>
          </Tools>
          <Tools>
            <Tool type="button" aria-label="Undo"><ArrowCurve color="#243038" /></Tool>
            <Tool type="button" aria-label="Redo"><ArrowCurve color="#c6d0da" flip /></Tool>
          </Tools>
          <Spacer />
          <Tools>
            <Tool type="button" aria-label="Show all" $small><BulbIcon color="#c6d0da" /></Tool>
            <CaretBtn type="button" aria-label="Visibility options"><Triangle $down $big /></CaretBtn>
          </Tools>
          <Tools>
            <Tool type="button" aria-label="Group"><GroupIcon /></Tool>
            <Tool type="button" aria-label="Ungroup"><UngroupIcon /></Tool>
          </Tools>
          <Tools>
            <Tool type="button" aria-label="Align"><AlignIcon /></Tool>
            <Tool type="button" aria-label="Mirror"><MirrorIcon /></Tool>
            <Tool type="button" aria-label="Cruise"><MagnetIcon /></Tool>
          </Tools>
          <FileButtons>
            <button type="button">Import</button>
            <button type="button">Export</button>
            <button type="button">Send To</button>
          </FileButtons>
        </EditBar>

        <Main>
          <Workplane>
            <Scene />
            <ViewControls>
              <ViewCube type="button">TOP</ViewCube>
              <RoundBtn type="button" aria-label="Home view"><svg width="16" height="16" fill="none" stroke="#a3a9ac"><path d="M1 8l7-7 7 7h-3v7H9v-4H7v4H4V8z" /></svg></RoundBtn>
              <RoundBtn type="button" aria-label="Fit view"><svg width="16" height="16" fill="none" stroke="#a3a9ac"><path d="M1 5V1h4M11 1h4v4M15 11v4h-4M5 15H1v-4" /></svg></RoundBtn>
              <RoundBtn type="button" aria-label="Zoom in"><Plus size={17} strokeWidth={1.5} /></RoundBtn>
              <RoundBtn type="button" aria-label="Zoom out"><Minus size={17} strokeWidth={1.5} /></RoundBtn>
              <RoundBtn type="button" aria-label="Orthographic view"><svg width="18" height="16" fill="none" stroke="#a3a9ac"><path d="M5 14V6h9v8zM5 6L3 2h9l2 4M3 2v8l2 4M0 14.500h17" /></svg></RoundBtn>
            </ViewControls>

            <SizeInput aria-label="Depth" defaultValue="60.00" />
            <EdgeInput aria-label="Position X" defaultValue="100.00" $x={1178} $w={50} />
            <EdgeInput aria-label="Position Y" defaultValue="0.00" $x={1334} $w={40} />

            <Inspector>
              <Fold type="button" aria-label="Collapse"><ChevronDown size={19} /></Fold>
              <InspectorTitle>Shapes(3)</InspectorTitle>
              <InspectorTools>
                <button type="button" aria-label="Lock"><svg width="14" height="18"><path d="M0 8h14v10H0z" fill="#52647b" /><path d="M10 8V4q0-3-3-3-2 0-3 2" fill="none" stroke="#52647b" strokeWidth="1.600" /></svg></button>
                <button type="button" aria-label="Hide"><BulbIcon color="#52647b" fill="#c3cad4" width={14} height={19} /></button>
              </InspectorTools>
            </Inspector>

            <SnapBox>
              <SettingsBtn type="button">Settings</SettingsBtn>
              <SnapRow>
                <label htmlFor="snap">Snap Grid</label>
                <SnapField>
                  <select id="snap" defaultValue="0.1 mm"><option>0.1 mm</option><option>1.0 mm</option></select>
                  <Triangle />
                </SnapField>
              </SnapRow>
            </SnapBox>
            <CollapseBtn type="button" aria-label="Hide shapes panel"><svg width="8" height="22" fill="none" stroke="#111" strokeWidth="2"><path d="M1 1l5 10-5 10" /></svg></CollapseBtn>
          </Workplane>

          <Sidebar>
            <Helpers>
              <button type="button" aria-label="Workplane"><WorkplaneIcon /></button>
              <button type="button" aria-label="Ruler"><RulerIcon /></button>
              <button type="button" aria-label="Notes"><NotesIcon /></button>
            </Helpers>
            <Picker>
              <PickerField>
                <select aria-label="Shape category" value={category} onChange={(e) => setCategory(e.target.value)}>
                  <option>Basic Shapes</option>
                  <option>Featured</option>
                </select>
                <Sorter><Triangle /><Triangle $down /></Sorter>
              </PickerField>
              <FindBtn type="button" aria-label="Search shapes"><Search size={25} /></FindBtn>
            </Picker>
            <ShapeList>
              {rows.map((row, i) => (
                <ShapeRow key={i} $first={i === 0}>
                  {row.map(([name, art, badge]) => (
                    <ShapeCell key={name} type="button" aria-label={name}>
                      <svg width="58" height="62" viewBox="0 0 60 64">{art}</svg>
                      {badge && <Badge>{badge}</Badge>}
                    </ShapeCell>
                  ))}
                </ShapeRow>
              ))}
              <ScrollThumb />
            </ShapeList>
          </Sidebar>
        </Main>

        {/* taskbar */}
        <Taskbar>
          <News type="button">
            <NewsIcon>
              <svg width="26" height="26"><rect y="3" width="26" height="21" rx="3" fill="#e8e8e8" /><path d="M0 9V6q0-3 3-3h20q3 0 3 3v3z" fill="#1ea3d8" /><path d="M3 12h9v8H3z" fill="#666" /><path d="M15 13h8M15 18h8" stroke="#777" strokeWidth="2.500" /></svg>
              <Count>1</Count>
            </NewsIcon>
            <NewsText><strong>News for you</strong><span>Israel halts Nort...</span></NewsText>
          </News>
          <Dock>
            <Start type="button" aria-label="Start">
              <svg width="28" height="28"><g fill="#4cc2ff"><rect width="13" height="13" rx="1" /><rect x="15" width="13" height="13" rx="1" /><rect y="15" width="13" height="13" rx="1" fill="#33b1fb" /><rect x="15" y="15" width="13" height="13" rx="1" fill="#1a9ffa" /></g></svg>
            </Start>
            <TaskSearch>
              <Search size={19} color="#222" />
              <input aria-label="Search" placeholder="Search" />
              <svg width="50" height="32" viewBox="0 0 50 32">
                <path d="M2 30q23-6 46 0z" fill="#9aa57e" />
                <g stroke="#7d6d58" strokeWidth="1.200" fill="none"><path d="M9 30V8M25 30V3M41 30V8M3 18q6 4 12-2M3 24q6 4 12-2M16 12q9 5 17-3M16 20q9 5 18-2M35 18q6 4 12-2M35 24q6 4 12-2" /></g>
                <g fill="#c3ced7" stroke="#6f8291" strokeWidth=".6">{[[9, 8], [4, 15], [14, 14], [4, 22], [14, 21], [25, 4], [18, 10], [32, 8], [18, 18], [32, 17], [25, 13], [41, 8], [36, 15], [46, 14], [36, 22], [46, 21]].map(([x, y]) => <ellipse key={`${x}-${y}`} cx={x} cy={y} rx="3" ry="1.800" />)}</g>
              </svg>
            </TaskSearch>
            {TASKS.map(([name, art, state]) => (
              <Task key={name} type="button" aria-label={name} $state={state}>{art}{state && <Running $state={state} />}</Task>
            ))}
          </Dock>
          <Tray>
            <button type="button" aria-label="Hidden icons"><ChevronUp size={19} /></button>
            <svg width="22" height="16"><path d="M5 14q-5 0-4-5 1-3 4-3 2-5 7-4 4 1 4 4 5 1 5 5-1 3-4 3z" fill="#a9a9ad" /><path d="M6 15q-4 0-4-3t4-3q3-4 7-1 6-2 8 4 0 3-3 3z" fill="#f1f1f1" /></svg>
            <Sync><RefreshCw size={20} strokeWidth={1.5} /><i /></Sync>
            <Drop><FaDropbox size={18} /><b>8</b></Drop>
            <Lang>ENG</Lang>
            <Status><Wifi size={22} strokeWidth={2} /><Volume2 size={21} strokeWidth={1.6} />
              <svg width="22" height="18" fill="none" stroke="#fff" strokeWidth="1.500"><rect x="2" y="5" width="17" height="11" rx="2" /><path d="M8 8h8v5H5z" fill="#fff" /><path d="M21 9v3" strokeWidth="2" /><path d="M5 0L1 7h3l-1 5 5-7H5l1-5z" fill="#fff" stroke="none" /></svg>
            </Status>
            <Clock><span>3:14 AM</span><span>26-Jan-25</span></Clock>
          </Tray>
        </Taskbar>
      </Screen>
    </>
  );
}

/* ===== styled ===== */
const Screen = styled.div`
  height: 100vh;
  display: flex;
  flex-direction: column;
  background: #ffaa3f;
`;
const HiddenSvg = styled.svg`
  position: absolute;
`;
const LogoGrid = styled.span`
  display: grid;
  grid-template-columns: repeat(3, 1fr);
  grid-template-rows: repeat(3, 1fr);
  gap: 1px;
  width: ${(p) => p.$size}px;
  height: ${(p) => p.$size}px;
  font-size: ${(p) => p.$font}px;
`;
const LogoTile = styled.span`
  display: flex;
  align-items: center;
  justify-content: center;
  min-width: 0;
  min-height: 0;
  background: ${(p) => p.$bg};
  color: #fff;
  font-weight: 700;
  line-height: 1;
`;
const Fav = styled.span`
  display: flex;
  align-items: center;
  justify-content: center;
  width: 20px;
  height: 20px;
  border: ${(p) => (p.$ring ? "1px solid #fff" : "0")};
  border-radius: ${(p) => (p.$round ? "50%" : "3px")};
  background: ${(p) => p.$bg};
`;

/* tab strip */
const TabStrip = styled.div`
  display: flex;
  align-items: center;
  height: 47px;
  padding-left: 8px;
  background: #ffaa3f;
`;
const TabMenu = styled.button`
  display: grid;
  place-items: center;
  width: 33px;
  height: 32px;
  margin-right: 4px;
  border-radius: 10px;
  background: #ffdfb5;
`;
const Group = styled.div`
  display: flex;
  align-items: center;
`;
const Tab = styled.button`
  display: flex;
  align-items: center;
  justify-content: center;
  width: ${(p) => (p.$narrow ? 39 : 40)}px;
  height: 20px;
  border-right: 2px solid #ffdfb5;
  &:last-child { border-right-color: ${(p) => (p.$narrow ? "transparent" : "#ffdfb5")}; }
`;
const Asleep = styled.span`
  display: grid;
  place-items: center;
  > * { grid-area: 1 / 1; }
`;
const Shrink = styled.span`
  transform: scale(0.85);
`;
const ComicsGroup = styled(Group)`
  height: 47px;
  margin-left: 12px;
  background: linear-gradient(#1a73e8, #1a73e8) left bottom / calc(100% - 11px) 2px no-repeat;
  > button:first-child { margin-right: 8px; }
`;
const FamilyGroup = styled(Group)`
  height: 20px;
  margin-left: 8px;
  padding-right: 8px;
  border-right: 2px solid #ffdfb5;
`;
const Pill = styled.button`
  height: 24px;
  padding: 0 7px;
  border-radius: 7px;
  background: ${(p) => p.$bg};
  color: #fff;
  font-size: 14px;
  line-height: 20px;
`;
const ActiveTab = styled.button`
  position: relative;
  display: grid;
  place-items: center;
  align-self: flex-end;
  width: 38px;
  height: 40px;
  margin-left: 2px;
  padding-bottom: 7px;
  border-radius: 10px 10px 0 0;
  background: #ffdfb5;
  &::before, &::after {
    content: "";
    position: absolute;
    bottom: 0;
    width: 10px;
    height: 10px;
  }
  &::before { right: 100%; background: radial-gradient(circle at 0 0, transparent 10px, #ffdfb5 10px); }
  &::after { left: 100%; background: radial-gradient(circle at 100% 0, transparent 10px, #ffdfb5 10px); }
`;
const NewTab = styled.button`
  display: grid;
  place-items: center;
  width: 47px;
  height: 32px;
`;
const WindowButtons = styled.div`
  display: flex;
  margin-left: auto;
  > button { display: grid; place-items: center; width: 54px; height: 40px; }
`;

/* address bar */
const AddressRow = styled.div`
  display: flex;
  align-items: center;
  height: 56px;
  padding: 0 8px 0 4px;
  border-radius: 10px 10px 0 0;
  background: #ffdfb5;
  border-bottom: 1px solid #e0c39c;
`;
const NavBtn = styled.button`
  display: grid;
  place-items: center;
  width: 43px;
  height: 40px;
  color: ${(p) => (p.$dim ? "#a08c70" : "#222")};
`;
const Omnibox = styled.div`
  flex: 1;
  display: flex;
  align-items: center;
  height: 40px;
  margin-left: 9px;
  padding: 0 8px 0 6px;
  border-radius: 20px;
  background: #dfc4a0;
`;
const SiteInfo = styled.button`
  display: grid;
  place-items: center;
  width: 28px;
  height: 28px;
  border-radius: 50%;
  background: #ffdfb5;
`;
const Url = styled.input`
  flex: 1;
  height: 30px;
  margin-left: 10px;
  padding: 0;
  border: 0;
  outline: 0;
  font-size: 16px;
  color: transparent;
  caret-color: #333;
  background: linear-gradient(to right, #2b2620 106px, #655949 106px);
  background-clip: text;
`;
const OmniBtn = styled.button`
  display: grid;
  place-items: center;
  width: 38px;
  color: #5a4f40;
`;
const Extensions = styled.div`
  display: flex;
  align-items: center;
  gap: 21px;
  margin: 0 15px 0 22px;
`;
const BarLine = styled.span`
  width: 2px;
  height: 20px;
  background: #ffaa3f;
`;
const UpdateBtn = styled.button`
  display: flex;
  align-items: center;
  justify-content: space-between;
  width: 130px;
  height: 39px;
  padding: 0 16px 0 14px;
  border-radius: 20px;
  background: #ffaa3f;
  color: #2a2118;
  font-size: 13px;
  font-weight: 500;
`;

/* app header */
const AppHeader = styled.header`
  display: flex;
  align-items: center;
  height: 47px;
  padding-left: 2px;
  background: #fafafa;
  border-bottom: 1px solid #d5dae0;
`;
const ListBtn = styled.button`
  margin: 0 13px 2px 12px;
`;
const Title = styled.h1`
  margin: 0 0 4px;
  color: #364b63;
  font-family: "Noto Sans", sans-serif;
  font-size: 15px;
  line-height: 20px;
  font-weight: 600;
`;
const Modes = styled.div`
  display: flex;
  align-self: stretch;
  margin-left: auto;
`;
const Mode = styled.button`
  display: grid;
  place-items: center;
  width: 47px;
  border-right: 1px solid #dfe3e8;
  background: ${(p) => (p.$active ? "#5c94da" : "#fff")};
`;
const Avatar = styled.button`
  width: 48px;
  display: grid;
  place-items: center;
  svg { border-radius: 50%; }
`;

/* edit toolbar */
const EditBar = styled.div`
  display: flex;
  align-items: stretch;
  height: 44px;
  background: #f0f1f3;
  border-bottom: 1px solid #dfe1e5;
`;
const Tools = styled.div`
  display: flex;
  align-items: center;
  padding-right: 1px;
  border-right: 1px solid #dcdfe4;
`;
const Tool = styled.button`
  display: grid;
  place-items: center;
  width: ${(p) => (p.$small ? 41 : 45)}px;
  height: 40px;
`;
const Spacer = styled.div`
  flex: 1;
  border-right: 1px solid #dcdfe4;
`;
const CaretBtn = styled.button`
  display: grid;
  place-items: center;
  width: 26px;
  height: 28px;
  border-left: 1px solid #d3d9df;
`;
const Triangle = styled.i`
  display: block;
  width: 0;
  height: 0;
  border: ${(p) => (p.$big ? 5 : 4)}px solid transparent;
  ${(p) => (p.$down ? "border-top: 5px solid #222; border-bottom: 0;" : "border-bottom: 5px solid #222; border-top: 0;")}
`;
const FileButtons = styled.div`
  display: flex;
  align-items: center;
  gap: 6px;
  padding: 0 12px;
  > button {
    width: 77px;
    height: 31px;
    border: 1px solid #dfe2e7;
    border-radius: 3px;
    background: #f4f5f7;
    color: #52647b;
    font-family: "Noto Sans", sans-serif;
    font-size: 13px;
  }
`;

/* workplane */
const Main = styled.main`
  flex: 1;
  min-height: 0;
  display: flex;
  overflow: hidden;
`;
const Workplane = styled.section`
  position: relative;
  flex: 1;
  background: #fcfcfc;
`;
const SceneSvg = styled.svg`
  position: absolute;
  inset: 0;
  width: 100%;
  height: 100%;
`;
const ViewControls = styled.div`
  position: absolute;
  left: 17px;
  top: 31px;
  display: flex;
  flex-direction: column;
  gap: 8px;
`;
const ViewCube = styled.button`
  width: 59px;
  height: 59px;
  margin: 0 0 24px 13px;
  border: 1px solid #b5b9bb;
  background: rgba(255, 255, 255, 0.7);
  color: #9aa1a5;
  font-size: 14px;
  font-weight: 700;
`;
const RoundBtn = styled.button`
  display: grid;
  place-items: center;
  width: 32px;
  height: 32px;
  border: 1px solid #aeb2b4;
  border-radius: 50%;
  background: rgba(255, 255, 255, 0.6);
  color: #9ba1a4;
`;
const SizeInput = styled.input`
  position: absolute;
  left: 240px;
  top: 433px;
  width: 46px;
  height: 27px;
  padding: 0;
  border: 0;
  border-radius: 3px;
  background: #fff;
  color: #111;
  text-align: center;
  font: 14px "Liberation Sans", sans-serif;
`;
const EdgeInput = styled(SizeInput)`
  left: ${(p) => p.$x}px;
  top: 757px;
  width: ${(p) => p.$w}px;
`;
const Inspector = styled.div`
  position: absolute;
  right: 11px;
  top: 12px;
  display: grid;
  grid-template-columns: 47px 1fr;
  align-content: start;
  width: 243px;
  height: 62px;
  background: #fff;
  box-shadow: 0 1px 3px rgba(60, 80, 100, 0.25);
`;
const Fold = styled.button`
  grid-row: 1 / 3;
  padding: 12px 0 0 10px;
  color: #c0c6cc;
`;
const InspectorTitle = styled.h2`
  margin: 1px 0 0;
  color: #3c4f66;
  font-family: "Noto Sans", sans-serif;
  font-size: 14px;
  line-height: 24px;
  font-weight: 600;
`;
const InspectorTools = styled.div`
  display: flex;
  align-items: center;
  justify-content: flex-end;
  gap: 18px;
  padding: 5px 19px 0 0;
`;
const SnapBox = styled.div`
  position: absolute;
  right: 10px;
  bottom: 11px;
  display: flex;
  flex-direction: column;
  align-items: flex-end;
  gap: 9px;
  font-family: "Noto Sans", sans-serif;
  font-size: 12px;
`;
const SettingsBtn = styled.button`
  width: 84px;
  height: 21px;
  border: 1px solid #e3e9ee;
  background: rgba(255, 255, 255, 0.8);
  color: #7a8794;
`;
const SnapRow = styled.div`
  display: flex;
  align-items: center;
  gap: 7px;
  color: #5d7285;
`;
const SnapField = styled.div`
  display: flex;
  align-items: center;
  width: 72px;
  height: 21px;
  padding: 0 7px;
  border: 1px solid #e3e9ee;
  background: rgba(255, 255, 255, 0.85);
  select {
    flex: 1;
    min-width: 0;
    padding: 0;
    border: 0;
    appearance: none;
    background: none;
    color: #8a939b;
    font-size: 12px;
  }
`;
const CollapseBtn = styled.button`
  position: absolute;
  right: -6px;
  top: 365px;
  z-index: 1;
  display: grid;
  place-items: center;
  width: 15px;
  height: 44px;
  border: 1px solid #e3e6ea;
  border-right: 0;
  background: #f5f6f8;
`;

/* sidebar */
const Sidebar = styled.aside`
  display: flex;
  flex-direction: column;
  width: 262px;
  padding: 13px 5px 0 10px;
  background: #f0f1f3;
`;
const Helpers = styled.div`
  display: flex;
  justify-content: space-between;
  padding: 0 22px 0 14px;
  > button { display: grid; place-items: center; height: 44px; }
`;
const Picker = styled.div`
  display: flex;
  gap: 3px;
  margin: 16px 5px 11px 0;
`;
const PickerField = styled.div`
  flex: 1;
  display: flex;
  align-items: center;
  height: 44px;
  padding: 0 9px 2px 10px;
  border: 1px solid #dfe3e9;
  border-radius: 2px;
  background: #f5f6f8;
  box-shadow: 0 1px 2px rgba(60, 80, 110, 0.12);
  select {
    flex: 1;
    padding: 0;
    border: 0;
    appearance: none;
    background: none;
    color: #5b6b7e;
    font-family: "Noto Sans", sans-serif;
    font-size: 14px;
  }
`;
const Sorter = styled.span`
  display: grid;
  gap: 3px;
`;
const FindBtn = styled.button`
  display: grid;
  place-items: center;
  width: 44px;
  height: 44px;
  border: 1px solid #dfe3e9;
  background: #f5f6f8;
  box-shadow: 0 1px 2px rgba(60, 80, 110, 0.12);
`;
const ShapeList = styled.div`
  position: relative;
  flex: 1;
  min-height: 0;
  overflow: hidden;
`;
const ShapeRow = styled.div`
  display: grid;
  grid-template-columns: repeat(3, 1fr);
  gap: 5px;
  margin: 0 5px ${(p) => (p.$first ? 6 : 12)}px 0;
`;
const ShapeCell = styled.button`
  position: relative;
  display: grid;
  place-items: center;
  height: 87px;
  border-radius: 3px;
  background: radial-gradient(circle at 50% 42%, #e6e7e9 8px, #f6f7f9 30px);
`;
const Badge = styled.span`
  position: absolute;
  left: 5px;
  right: 5px;
  bottom: -9px;
  height: 21px;
  border-radius: 11px;
  background: #1eac50;
  box-shadow: 0 1px 2px rgba(0, 0, 0, 0.3);
  color: #fff;
  font-size: 12px;
  line-height: 19px;
  font-weight: 700;
  text-align: center;
`;
const ScrollThumb = styled.span`
  position: absolute;
  right: 0;
  top: 0;
  width: 7px;
  height: 503px;
  border-radius: 4px;
  background: #c1c1c1;
`;

/* taskbar */
const Taskbar = styled.footer`
  position: relative;
  display: flex;
  align-items: center;
  height: 57px;
  padding: 0 23px 0 25px;
  background: linear-gradient(to right, #1b2b3a, #21263a 17%, #33193a 22%, #2c1a3c 35%, #301c33 60%, #2b1b37 74%, #231a3e 86%, #2d1b2c);
  color: #fff;
`;
const News = styled.button`
  display: flex;
  align-items: center;
  width: 346px;
  text-align: left;
`;
const NewsIcon = styled.span`
  position: relative;
`;
const Count = styled.span`
  position: absolute;
  left: 12px;
  top: -9px;
  width: 18px;
  height: 18px;
  border-radius: 50%;
  background: #c42b1c;
  font-size: 12px;
  line-height: 18px;
  text-align: center;
`;
const NewsText = styled.span`
  display: grid;
  margin-left: 9px;
  font-size: 14px;
  line-height: 19px;
  strong { font-weight: 400; }
  span { color: #c8ccd2; }
`;
const Dock = styled.div`
  display: flex;
  align-items: center;
`;
const Start = styled.button`
  display: grid;
  place-items: center;
  width: 32px;
  margin-right: 14px;
`;
const TaskSearch = styled.label`
  display: flex;
  align-items: center;
  width: 258px;
  height: 37px;
  margin-right: 5px;
  padding: 0 8px 0 13px;
  border-radius: 19px;
  background: #f1f1f3;
  input {
    flex: 1;
    min-width: 0;
    margin-left: 10px;
    padding: 0;
    border: 0;
    outline: 0;
    background: none;
    font-size: 15px;
  }
  input::placeholder { color: #5c5c60; }
`;
const Task = styled.button`
  position: relative;
  display: grid;
  place-items: center;
  width: 48px;
  height: 48px;
  margin: 0 2px;
  border-radius: 5px;
  background: ${(p) => (p.$state === "alert" ? "#8a4147" : p.$state === "active" ? "rgba(255,255,255,.09)" : "none")};
  box-shadow: ${(p) => (p.$state === "alert" ? "1px 0 0 #b87078" : "none")};
`;
const Running = styled.i`
  position: absolute;
  bottom: 1px;
  left: 50%;
  width: ${(p) => (p.$state === "active" ? 18 : 8)}px;
  height: 4px;
  border-radius: 2px;
  background: ${(p) => ({ active: "#4cc2ff", alert: "#ff9da5", dot: "#9a949f" })[p.$state]};
  transform: translateX(-50%);
`;
const Round = styled.span`
  display: grid;
  place-items: center;
  border-radius: 50%;
  background: ${(p) => p.$bg};
`;
const Plate = styled.span`
  display: grid;
  place-items: center;
  width: 28px;
  height: 28px;
  background: #fff;
`;
const Tray = styled.div`
  display: flex;
  align-items: center;
  gap: 17px;
  margin-left: auto;
`;
const Sync = styled.span`
  position: relative;
  i { position: absolute; right: -1px; bottom: -1px; width: 10px; height: 10px; border-radius: 50%; background: #0f7be0; }
`;
const Drop = styled.span`
  position: relative;
  margin-left: 2px;
  b {
    position: absolute;
    left: -2px;
    bottom: -2px;
    width: 10px;
    height: 10px;
    border-radius: 2px;
    background: #e0102f;
    font-size: 8px;
    line-height: 10px;
    text-align: center;
  }
`;
const Lang = styled.span`
  margin: 0 4px 0 6px;
  font-size: 14px;
`;
const Status = styled.span`
  display: flex;
  align-items: center;
  gap: 7px;
`;
const Clock = styled.time`
  display: grid;
  font-size: 14px;
  line-height: 19px;
  text-align: right;
`;
